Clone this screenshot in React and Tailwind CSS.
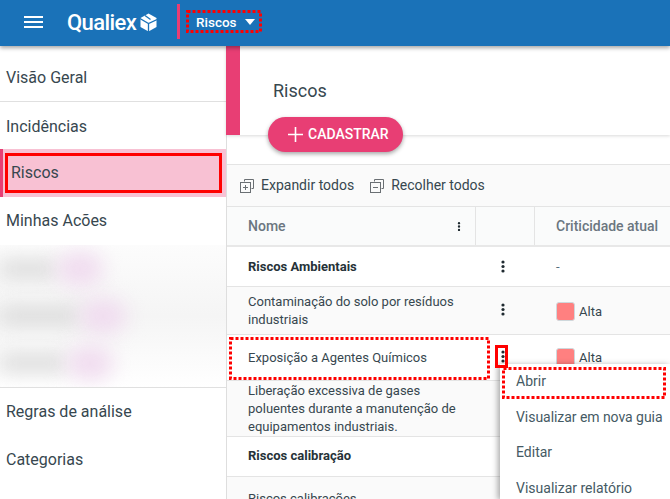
const font = { fontFamily: "Roboto, 'Liberation Sans', sans-serif" };

function Dots({ className = "" }) {
  return (
    <svg width="4" height="13" viewBox="0 0 4 13" className={className}>
      <circle cx="2" cy="2" r="1.6" fill="#1f2a30" />
      <circle cx="2" cy="6.5" r="1.6" fill="#1f2a30" />
      <circle cx="2" cy="11" r="1.6" fill="#1f2a30" />
    </svg>
  );
}

function StackIcon({ minus }) {
  return (
    <svg width="14" height="14" viewBox="0 0 14 14" fill="none" stroke="#6a6f73" strokeWidth="1">
      <path d="M4.5 2.5V.5h9v9h-2" />
      <rect x="0.5" y="3.5" width="10" height="10" />
      <path d="M3 8.5h5" />
      {!minus && <path d="M5.5 6v5" />}
    </svg>
  );
}

function Logo() {
  return (
    <svg width="17" height="19" viewBox="0 0 17 19">
      <path d="M8.5 0.5 16.5 5v9l-8 4.5-8-4.5V5z" fill="#fff" />
      <path d="M0 5.5l8.5 5 8.5-4M8.5 10.5V19M5 2.5l5.5 4" fill="none" stroke="#1a72b8" strokeWidth="1.3" />
    </svg>
  );
}

// contorno pontilhado das marcacoes do tutorial
function DottedBox({ w, h, className = "" }) {
  return (
    <svg width={w} height={h} className={`absolute ${className}`}>
      <rect
        x="1.5"
        y="1.5"
        width={w - 3}
        height={h - 3}
        fill="none"
        stroke="#ff0000"
        strokeWidth="3"
        strokeDasharray="3 2"
      />
    </svg>
  );
}

function SideItem({ children, h = "h-12", extra = "" }) {
  return (
    <div className={`${h} ${extra} flex items-center pl-[6px] text-[16px] text-[#37474f]`}>{children}</div>
  );
}

function BlurRow({ w, blob }) {
  return (
    <div className="h-[47px] flex items-center overflow-visible">
      <div className={`${w} h-[18px] bg-[#dadada] blur-[10px] shrink-0`} />
      <div className={`${blob} w-[46px] h-[34px] rounded-full bg-[#f0dcef] blur-[10px] shrink-0`} />
    </div>
  );
}

function Crit({ label }) {
  return (
    <div className="flex items-center gap-[4px]">
      <span className="w-[19px] h-[19px] rounded-[3px] bg-[#ff8080] border border-[#cfd8dc]" />
      <span className="text-[13px] text-[#37474f]">{label}</span>
    </div>
  );
}

function Row({ h, bold, children, dots = true, dotsClass = "", textClass = "", critClass = "", crit, bg = "bg-white" }) {
  return (
    <div className={`${h} ${bg} flex border-b border-[#e4e4e4] shrink-0`}>
      <div
        className={`w-[249px] pl-[21px] pr-2 flex items-center text-[13px] leading-[18px] ${textClass} ${
          bold ? "font-bold text-[#263238]" : "text-[#37474f]"
        }`}
      >
        <div>{children}</div>
      </div>
      <div className="w-[59px] pr-[5px] flex items-center justify-center">
        {dots && <Dots className={dotsClass} />}
      </div>
      <div className={`flex-1 pl-[21px] flex items-center text-[13px] text-[#546e7a] ${critClass}`}>{crit}</div>
    </div>
  );
}

export default function App() {
  return (
    <div style={font} className="relative w-[670px] h-[499px] overflow-hidden bg-white">
      <header className="relative z-20 h-[46px] bg-[#1a72b8] flex items-center shadow-[0_2px_4px_rgba(0,0,0,0.35)]">
        <svg width="19" height="12" viewBox="0 0 19 12" className="ml-[24px] -mt-[2px]" fill="#fff">
          <rect y="0" width="19" height="2" />
          <rect y="5" width="19" height="2" />
          <rect y="10" width="19" height="2" />
        </svg>
        <span className="ml-[24px] w-[73px] text-[22px] font-medium text-white tracking-[-0.6px] -mt-[2px]">
          Qualiex
        </span>
        <span className="flex -mt-[2px]">
          <Logo />
        </span>
        <div className="ml-[20px] w-[3px] h-[35px] -mt-[3px] bg-[#e83e74]" />
        <div className="relative ml-[6px] h-[23px] w-[76px] -mt-[3px] flex items-center pl-[10px] pt-[1px] gap-[8px]">
          <DottedBox w={76} h={23} className="left-0 top-0" />
          <span className="text-[13.5px] font-medium text-white">Riscos</span>
          <span className="w-0 h-0 border-l-[5px] border-r-[5px] border-t-[6px] border-l-transparent border-r-transparent border-t-white" />
        </div>
      </header>

      <div className="flex h-[453px]">
        <aside className="w-[227px] shrink-0 border-r border-[#dedede] flex flex-col">
          <div className="h-[56px] flex items-center pl-[6px] pt-[8px] text-[16px] text-[#37474f] border-b border-[#e0e0e0]">
            Visão Geral
          </div>
          <SideItem h="h-[47px]" extra="pt-[2px]">
            Incidências
          </SideItem>
          <div className="h-[48px] bg-[#f8c1d3] border-l-[3px] border-[#e83e74] pl-[2px] pr-[4px] py-[4px]">
            <div className="h-full border-[3px] border-[#ff0000] flex items-center pl-[3px] text-[16px] text-[#37474f]">
              Riscos
            </div>
          </div>
          <SideItem>Minhas Acões</SideItem>
          <div className="h-[143px] overflow-hidden bg-gradient-to-b from-[#fcfcfc] via-[#f5f5f5] to-white border-b border-[#e0e0e0]">
            <BlurRow w="w-[57px]" blob="ml-[0px]" />
            <BlurRow w="w-[80px]" blob="ml-[0px]" />
            <BlurRow w="w-[67px]" blob="ml-[0px]" />
          </div>
          <SideItem h="h-[47px]">Regras de análise</SideItem>
          <SideItem extra="pt-[1px]">Categorias</SideItem>
        </aside>

        <main className="flex-1 flex flex-col min-w-0">
          <div className="relative z-10 h-[89px] shrink-0 flex bg-white shadow-[0_1px_3px_rgba(0,0,0,0.15)] -ml-px">
            <div className="w-[14px] bg-[#e83e74]" />
            <div className="pl-[33px] pt-[31px] text-[18px] text-[#37474f]">Riscos</div>
          </div>
          <div className="relative z-10 h-[29px] shrink-0 -mt-[18px] ml-[41px] mb-[18px]">
            <button className="h-[35px] w-[135px] rounded-full bg-[#e83e74] text-white text-[14px] font-medium flex items-center pl-[20px] gap-[5px] shadow-[0_2px_4px_rgba(0,0,0,0.35)]">
              <svg width="15" height="15" viewBox="0 0 15 15" stroke="#fff" strokeWidth="1.6">
                <path d="M7.5 0v15M0 7.5h15" />
              </svg>
              CADASTRAR
            </button>
          </div>

          <div className="h-[43px] shrink-0 bg-[#fafafa] border-y border-[#e4e4e4] flex items-center pl-[13px] gap-[16px] text-[14px] text-[#37474f]">
            <span className="flex items-center gap-[7px]">
              <StackIcon />
              Expandir todos
            </span>
            <span className="flex items-center gap-[7px]">
              <StackIcon minus />
              Recolher todos
            </span>
          </div>

          <div className="h-[40px] shrink-0 bg-[#fafbfb] border-b-2 border-[#e8e8e8] flex text-[14px] font-medium text-[#6b7680]">
            <div className="w-[249px] pl-[21px] pr-[14px] border-r border-[#e4e4e4] flex items-center justify-between">
              Nome
              <Dots className="scale-75" />
            </div>
            <div className="w-[59px] border-r border-[#e4e4e4]" />
            <div className="flex-1 pl-[21px] flex items-center whitespace-nowrap">Criticidade atual</div>
          </div>

          <Row h="h-[40px]" bold textClass="pt-[1px]" crit="-">
            Riscos Ambientais
          </Row>
          <Row
            h="h-[48px]"
            bg="bg-[#fafafa]"
            dotsClass="-mt-[3px]"
            critClass="pt-[2px]"
            crit={<Crit label="Alta" />}
          >
            Contaminação do solo por resíduos
            <br />
            industriais
          </Row>
          <Row h="h-[46px]" dotsClass="-mt-[2px]" crit={<Crit label="Alta" />}>
            Exposição a Agentes Químicos
          </Row>
          <Row h="h-[56px]" bg="bg-[#fafafa]" dots={false}>
            Liberação excessiva de gases
            <br />
            poluentes durante a manutenção de
            <br />
            equipamentos industriais.
          </Row>
          <Row h="h-[40px]" bold textClass="pb-[2px]" dots={false}>
            Riscos calibração
          </Row>
          <div className="h-[22px] shrink-0 bg-[#fafafa] pl-[21px] pt-[13px] text-[13px] leading-[18px] text-[#37474f] overflow-hidden">
            Riscos calibrações
          </div>
        </main>
      </div>

      <DottedBox w={261} h={43} className="left-[229px] top-[337px]" />
      <div className="absolute left-[495px] top-[345px] w-[13px] h-[23px] border-[3px] border-[#ff0000] z-30" />

      <div className="absolute z-20 left-[500px] top-[364px] w-[170px] h-[135px] bg-white shadow-[-2px_1px_6px_rgba(0,0,0,0.35)] text-[14px] text-[#455a64]">
        <div className="relative h-[35.5px] flex items-center pl-[16px]">
          Abrir
          <DottedBox w={164} h={32} className="left-[2px] top-[3px]" />
        </div>
        <div className="h-[35.5px] flex items-center pl-[16px] whitespace-nowrap tracking-[-0.05px]">
          Visualizar em nova guia
        </div>
        <div className="h-[35.5px] flex items-center pl-[16px]">Editar</div>
        <div className="h-[35.5px] flex items-center pl-[16px]">Visualizar relatório</div>
      </div>
    </div>
  );
}
